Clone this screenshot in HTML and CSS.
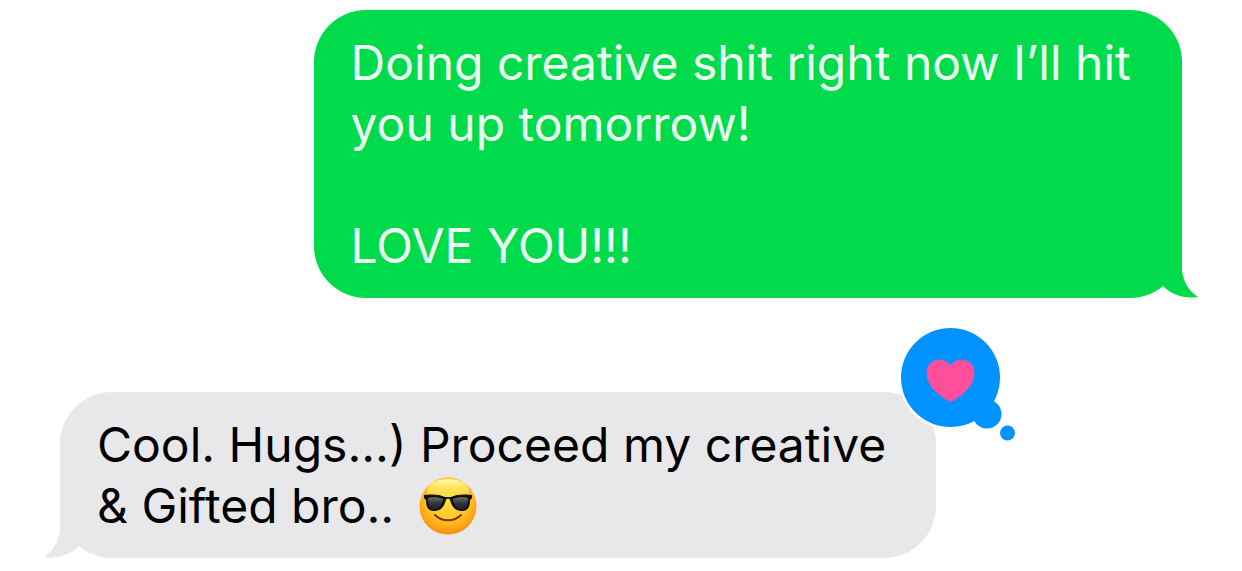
FILE: index.html
```html
<!DOCTYPE html>
<html lang="en">
<head>
    <meta charset="UTF-8">
    <meta name="viewport" content="width=device-width, initial-scale=1.0">
    <title>Messages</title>
    <link rel="stylesheet" href="styles.css">
</head>
<body>
    <main class="chat">
        <div class="message sent">
            <p>Doing creative shit right now I’ll hit you up tomorrow!</p>
            <p class="new-part">LOVE YOU!!!</p>
            <svg class="tail" viewBox="0 0 48 52" aria-hidden="true">
                <path d="M0 0H32V24C33 36 39 45 48 51C34 53 22 49 13 40L0 28Z"/>
            </svg>
        </div>
        <div class="message received">
            <p>Cool. Hugs...) Proceed my creative &amp; Gifted bro..
                <svg class="emoji" viewBox="0 0 58 58" role="img" aria-label="Smiling face with sunglasses">
                    <defs>
                        <radialGradient id="face" cx="50%" cy="38%" r="62%">
                            <stop offset="0" stop-color="#ffe03a"/>
                            <stop offset="0.55" stop-color="#ffc928"/>
                            <stop offset="0.85" stop-color="#ffa414"/>
                            <stop offset="1" stop-color="#f58a14"/>
                        </radialGradient>
                        <linearGradient id="shine" x1="0" y1="0" x2="0" y2="1">
                            <stop offset="0" stop-color="#fff9a8"/>
                            <stop offset="1" stop-color="#ffe94a" stop-opacity="0"/>
                        </linearGradient>
                        <linearGradient id="lens" x1="0" y1="0" x2="0" y2="1">
                            <stop offset="0" stop-color="#6b6d6c"/>
                            <stop offset="0.5" stop-color="#33373a"/>
                            <stop offset="1" stop-color="#202427"/>
                        </linearGradient>
                    </defs>
                    <circle cx="29" cy="29" r="28.5" fill="url(#face)"/>
                    <ellipse cx="29" cy="13" rx="21" ry="11" fill="url(#shine)"/>
                    <path d="M5 18C11 17 21 17 26 20H32C37 17 47 17 53 18V21L51 23C51 30 49 34 43 34C36 34 33 30 31 23C30 21 28 21 27 23C25 30 22 34 15 34C9 34 7 30 7 23L5 21Z" fill="#10130e"/>
                    <path d="M9 21C13 20 20 20 24 22C23 28 20 32 15 32C10 32 9 27 9 21Z" fill="url(#lens)"/>
                    <path d="M49 21C45 20 38 20 34 22C35 28 38 32 43 32C48 32 49 27 49 21Z" fill="url(#lens)"/>
                    <path d="M16 38C23 45 35 45 42 38" fill="none" stroke="#793609" stroke-width="2" stroke-linecap="round"/>
                </svg>
            </p>
            <svg class="tail" viewBox="0 0 48 52" aria-hidden="true">
                <path d="M0 0H32V24C33 36 39 45 48 51C34 53 22 49 13 40L0 28Z"/>
            </svg>
            <svg class="reaction" viewBox="0 0 120 120" role="img" aria-label="Loved">
                <circle cx="53.5" cy="53.5" r="52" fill="#fff"/>
                <g fill="#0093ff">
                    <circle cx="53.5" cy="53.5" r="49.5"/>
                    <circle cx="90" cy="90" r="14.5"/>
                    <circle cx="110.5" cy="109" r="7.5"/>
                </g>
                <path d="M53.5 77.5C51.5 77.5 41 70.5 35.5 64C32 59.500 30 55 30 49C30 41 35 36 42 36C47 36 51 38 53.5 42C56 38 60 36 65 36C72 36 77 41 77 49C77 55 75 59.5 71.5 64C66 70.5 55.5 77.5 53.5 77.5Z" fill="#ff4f9a" stroke="#c660bd" stroke-width="1"/>
            </svg>
        </div>
    </main>
</body>
</html>
```
FILE: styles.css
```css
* {
    box-sizing: border-box;
}

body {
    margin: 0;
    background: #fff;
    font-family: Inter, "Liberation Sans", sans-serif;
    font-size: 48px;
    line-height: 61px;
}

.chat {
    display: flex;
    flex-direction: column;
    gap: 94px;
    padding: 10px 60px;
}

.message {
    position: relative;
    padding: 22px 37px;
    border-radius: 52px;
}

.message p {
    margin: 0;
}

.message .new-part {
    margin-top: 61px;
}

.sent {
    align-self: flex-end;
    width: 77.4%;
    background: #00db4b;
    color: #edfff3;
    fill: #00db4b;
}

.received {
    align-self: flex-start;
    width: 78.1%;
    background: #e8e8ea;
    color: #000;
    fill: #e8e8ea;
}

.tail {
    position: absolute;
    right: -16px;
    bottom: 0;
    width: 48px;
    height: 52px;
}

.received .tail {
    right: auto;
    left: -16px;
    transform: scaleX(-1);
}

/* sits on the top right corner of the bubble */
.reaction {
    position: absolute;
    top: -68px;
    right: -81px;
    width: 120px;
    height: 120px;
}

.emoji {
    width: 58px;
    height: 58px;
    margin: -8px 0 0 11px;
    vertical-align: middle;
}
```
